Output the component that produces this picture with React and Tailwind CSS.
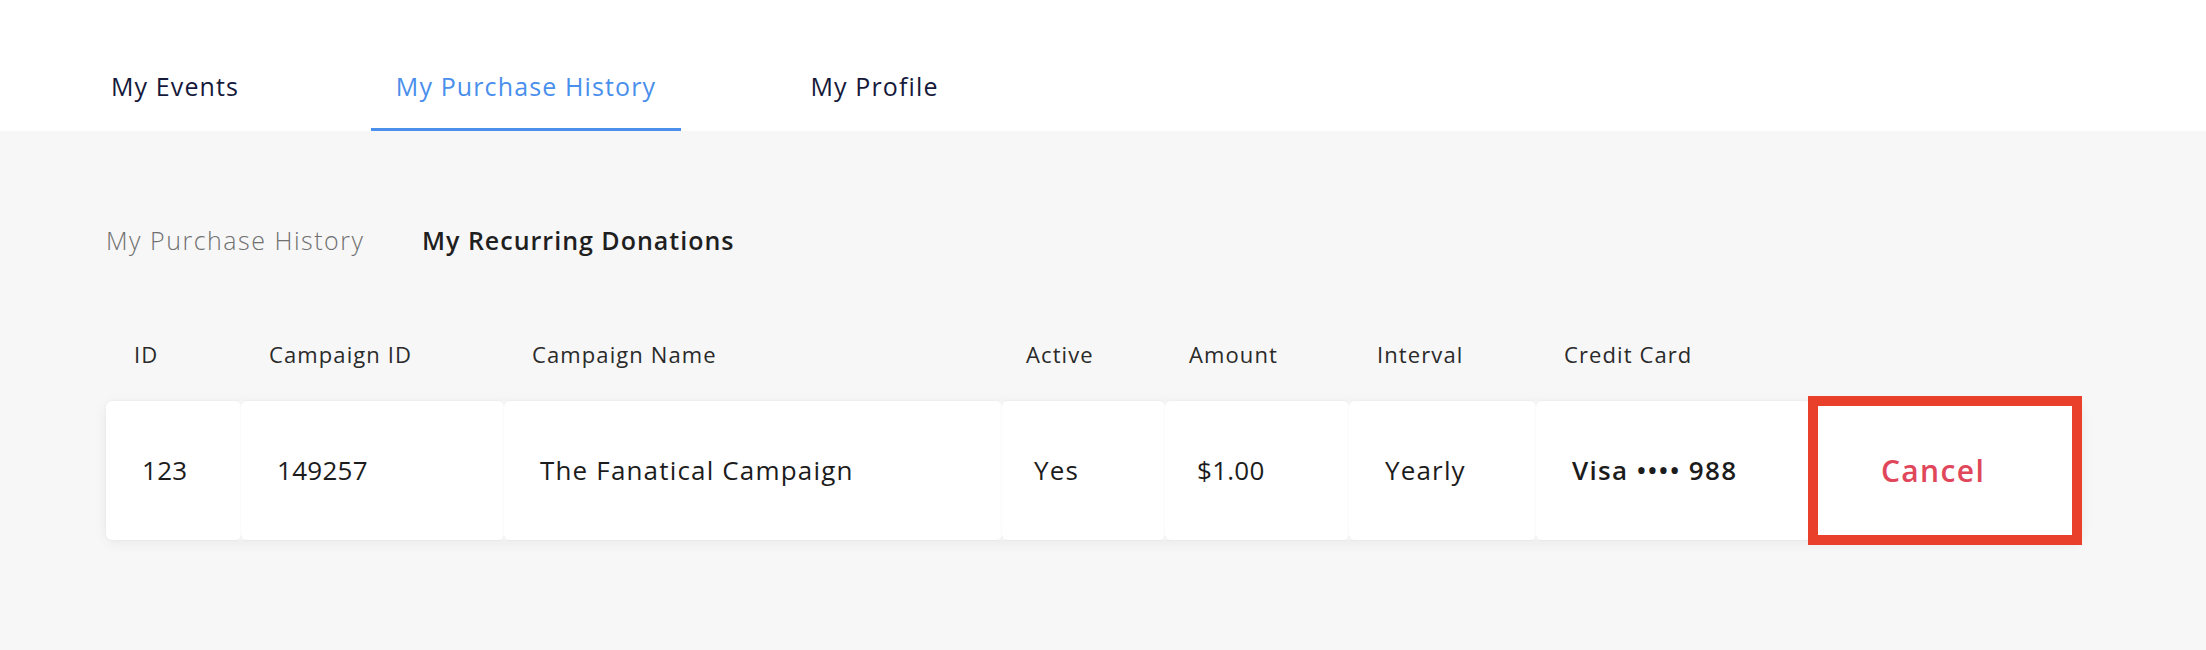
import React from 'react'

const font = { fontFamily: '"Open Sans", "Liberation Sans", sans-serif' }

const columns = [
  { key: 'id', label: 'ID', numeric: true },
  { key: 'campaignId', label: 'Campaign ID', numeric: true },
  { key: 'campaignName', label: 'Campaign Name' },
  { key: 'active', label: 'Active' },
  { key: 'amount', label: 'Amount', numeric: true },
  { key: 'interval', label: 'Interval' },
  { key: 'card', label: 'Credit Card' },
]

const donations = [
  {
    id: '123',
    campaignId: '149257',
    campaignName: 'The Fanatical Campaign',
    active: 'Yes',
    amount: '$1.00',
    interval: 'Yearly',
    card: 'Visa •••• 988',
  },
]

const grid = 'grid grid-cols-[135px_263px_498px_163px_184px_187px_275px_1fr]'

function TopTab({ label, active, width }) {
  return (
    <div
      className={`${width} h-[88px] pt-[3px] flex items-center justify-center border-b-[3px] text-[25px] tracking-[0.045em] font-medium ${
        active ? 'border-[#4a8fec] text-[#4a8fec]' : 'border-transparent text-[#15193a]'
      }`}
    >
      {label}
    </div>
  )
}

function cellText(col) {
  if (col.key === 'card') return 'font-semibold tracking-[0.05em]'
  if (col.numeric) return 'tracking-[0.01em]'
  return 'tracking-[0.045em]'
}

export default function App() {
  return (
    <div className="min-h-[650px] bg-[#f7f7f7]" style={font}>
      <div className="h-[131px] bg-white flex items-end pl-[89px] gap-[110px]">
        <TopTab label="My Events" width="w-[172px]" />
        <TopTab label="My Purchase History" width="w-[310px]" active />
        <TopTab label="My Profile" width="w-[167px]" />
      </div>

      <div className="pl-[106px] w-[2082px]">
        <div className="mt-[93px] h-[32px] flex items-center text-[25px] leading-[32px]">
          <span className="w-[316px] text-[#707070] font-light tracking-[0.06em]">My Purchase History</span>
          <span className="text-[#1f1f1f] font-semibold tracking-[0.04em]">My Recurring Donations</span>
        </div>

        <div className={`${grid} mt-[82px] h-[30px] items-center text-[22px] tracking-[0.05em] text-[#2a2a2a]`}>
          {columns.map((col, i) => (
            <div key={col.key} className={i >= 3 && i <= 4 ? 'pl-[24px]' : 'pl-[28px]'}>
              {col.label}
            </div>
          ))}
          <div />
        </div>

        {donations.map((d) => (
          <div
            key={d.id}
            className={`${grid} mt-[33px] h-[139px] rounded-[8px] shadow-[0_3px_14px_rgba(0,0,0,0.06)]`}
          >
            {columns.map((col, i) => (
              <div
                key={col.key}
                className={`flex items-center bg-white rounded-[6px] shadow-[0_0_3px_rgba(0,0,0,0.05)] ${
                  i >= 3 && i <= 4 ? 'pl-[32px]' : 'pl-[36px]'
                } text-[26px] text-[#1c1c1c] ${cellText(col)}`}
              >
                {d[col.key]}
              </div>
            ))}
            <div className="relative flex items-center bg-white rounded-[6px] pl-[70px]">
              <button className="text-[30px] font-semibold tracking-[0.045em] text-[#e0475a]">Cancel</button>
              <div className="absolute left-[-3px] right-[0px] top-[-5px] bottom-[-5px] border-[10px] border-[#e8402a] pointer-events-none" />
            </div>
          </div>
        ))}
      </div>
    </div>
  )
}
